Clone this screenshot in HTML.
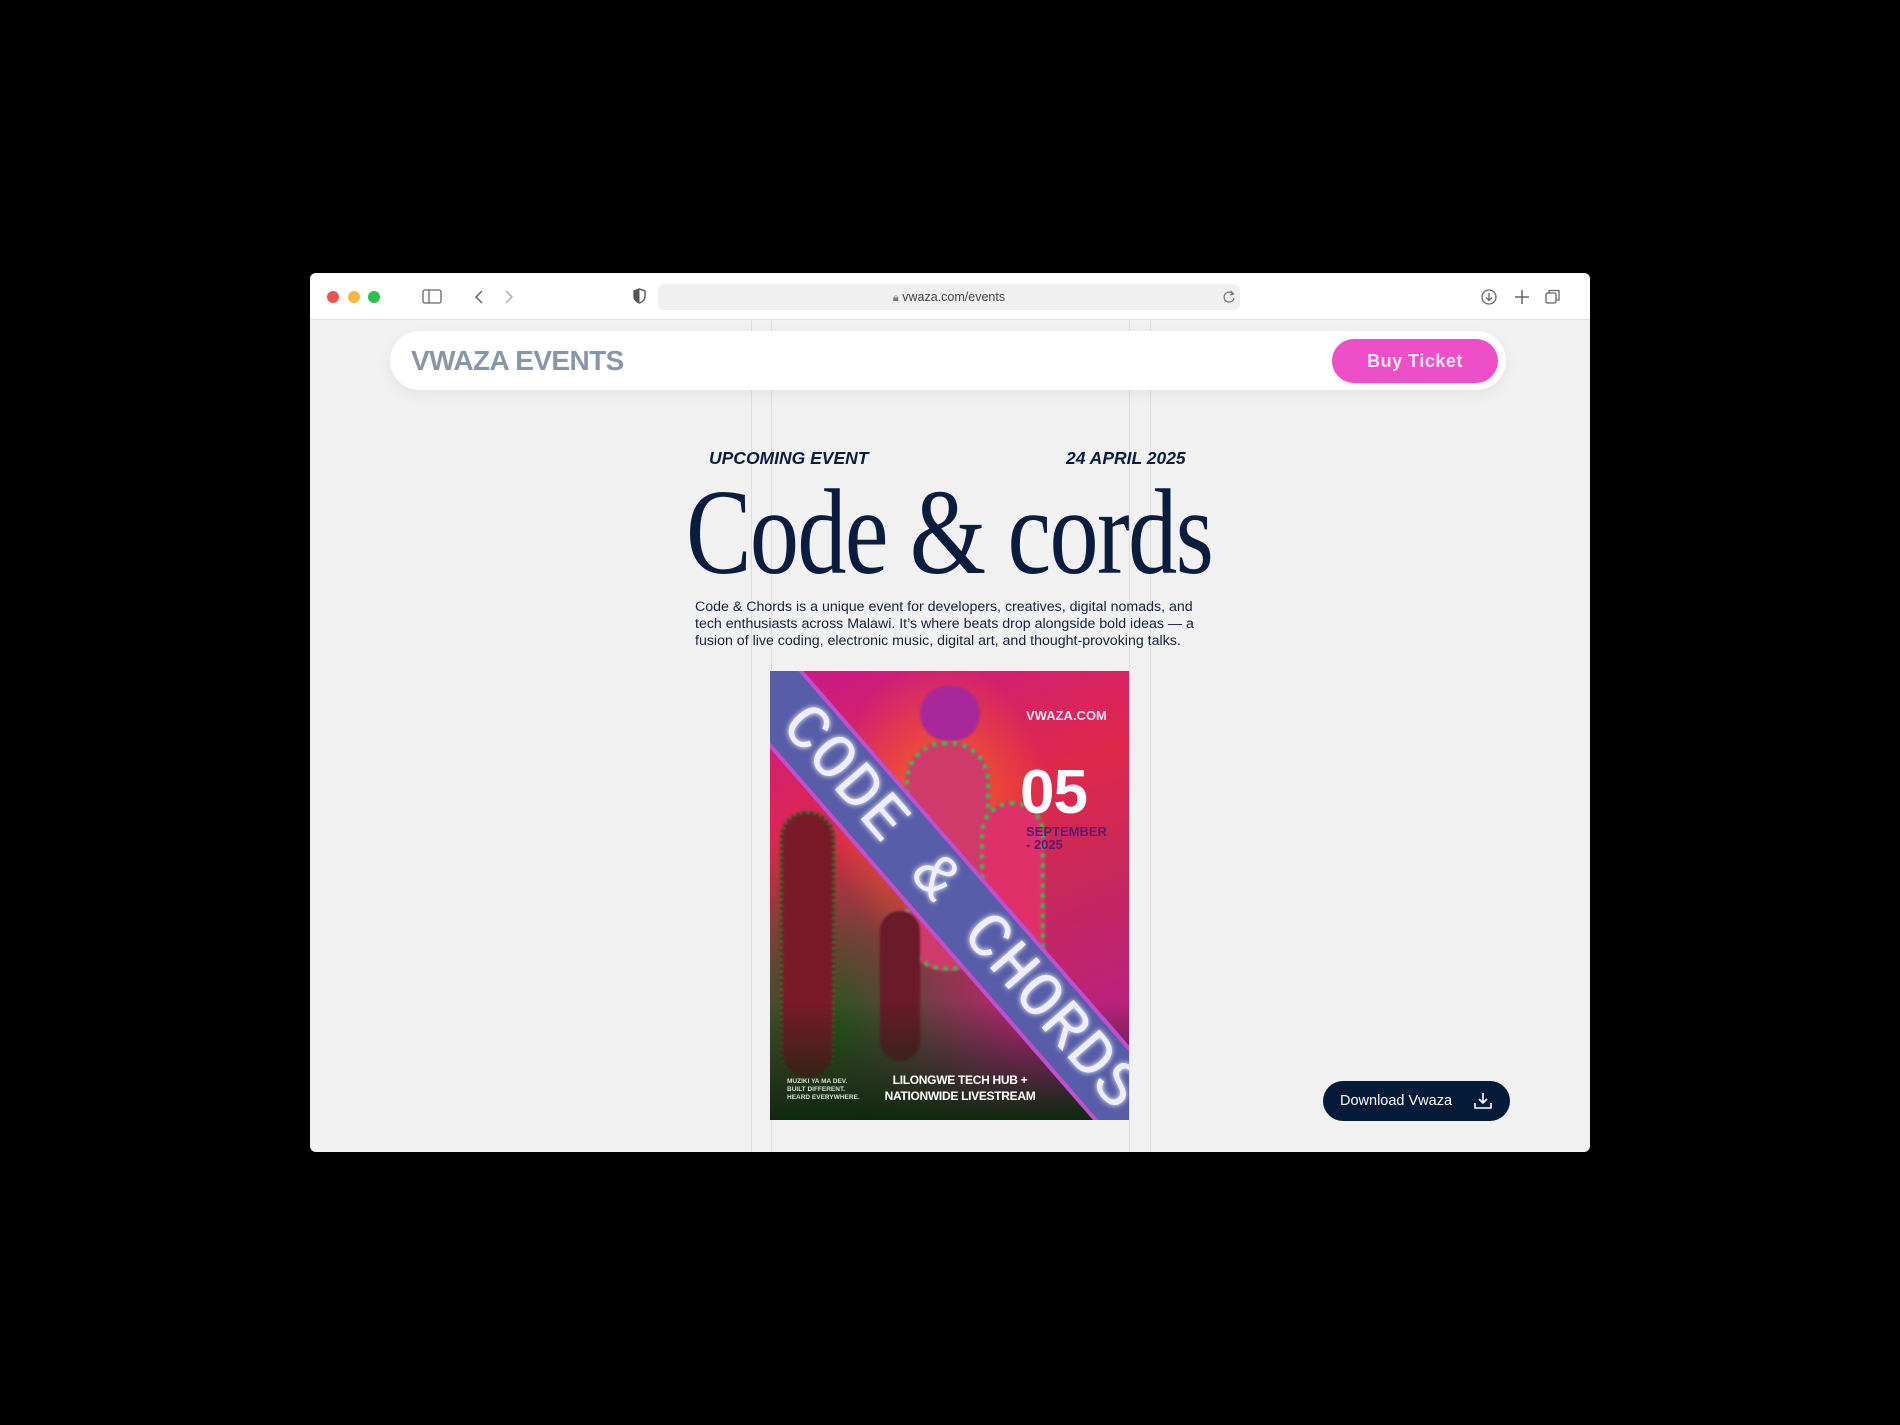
<!DOCTYPE html>
<html><head><meta charset="utf-8"><style>
*{margin:0;padding:0;box-sizing:border-box}
body{width:1900px;height:1425px;background:#000;position:relative;overflow:hidden;font-family:"Liberation Sans",sans-serif}
.win{position:absolute;left:310px;top:273px;width:1280px;height:879px;background:#f1f1f1;border-radius:6px;overflow:hidden}
.bar{position:absolute;left:0;top:0;width:1280px;height:47px;background:#fff;border-bottom:1px solid #e2e2e2}
.dot{position:absolute;top:18px;width:12px;height:12px;border-radius:50%}
.url{position:absolute;left:348px;top:11px;width:582px;height:26px;background:#f0f0f0;border-radius:6px;font-size:12.5px;color:#444;text-align:center;line-height:26px}
.vl{position:absolute;top:47px;bottom:0;width:1px;background:#dcdcdc}
.nav{position:absolute;left:80px;top:58px;width:1116px;height:59px;background:#fff;border-radius:30px;box-shadow:0 4px 14px rgba(0,0,0,.06)}
.logo{position:absolute;left:21px;top:14px;font-size:28px;font-weight:bold;color:#8896a8;letter-spacing:-0.6px}
.buy{position:absolute;left:942px;top:8px;width:166px;height:44px;border-radius:22px;background:#ee4fc8;color:#fde8f7;font-weight:bold;font-size:18px;text-align:center;line-height:44px;letter-spacing:.5px}
.lab{position:absolute;top:175px;font-size:17.5px;font-weight:bold;font-style:italic;color:#0b1d3e}
.title{position:absolute;left:376px;top:190px;font-family:"Liberation Serif",serif;font-size:122px;color:#0b1d3e;white-space:nowrap;transform-origin:0 0;transform:scaleX(.805);letter-spacing:-2px}
.p{position:absolute;left:385px;top:326px;width:510px;font-size:14.2px;line-height:17px;color:#14223f}
.poster{position:absolute;left:460px;top:398px;width:359px;height:449px;overflow:hidden;
background:radial-gradient(ellipse 110px 150px at 170px 140px,rgba(255,110,30,.9),rgba(255,110,30,0)),
radial-gradient(ellipse 200px 200px at 50px 360px,#1a5a18,rgba(30,90,30,0)),
linear-gradient(160deg,#c81a8a 0%,#e0284a 35%,#c8285a 55%,#b01c9a 100%)}
.fig{position:absolute;border-radius:40px;filter:blur(1px)}
.band{position:absolute;left:-140px;top:200px;width:660px;height:76px;background:#575da8;border-top:4px solid #c14fd0;border-bottom:4px solid #c14fd0;transform:rotate(49deg);transform-origin:center}
.bt{position:absolute;left:0;top:-2px;width:100%;text-align:center;font-family:"Liberation Mono",monospace;font-size:64px;line-height:72px;color:#eef;letter-spacing:1px;text-shadow:0 0 6px #fff}
.dl{position:absolute;left:1013px;top:808px;width:187px;height:40px;border-radius:20px;background:#061a3a;color:#fff;font-size:14.5px;line-height:40px;padding-left:17px}
</style></head><body>
<div class="win">
 <div class="bar">
  <div class="dot" style="left:17px;background:#ef5350"></div>
  <div class="dot" style="left:38px;background:#f6b73c"></div>
  <div class="dot" style="left:58px;background:#29c24a"></div>
  <svg style="position:absolute;left:112px;top:16px" width="20" height="15"><rect x="1" y="1" width="18" height="13" rx="2" fill="none" stroke="#666" stroke-width="1.3"/><line x1="7" y1="1" x2="7" y2="14" stroke="#666" stroke-width="1.3"/></svg>
  <svg style="position:absolute;left:163px;top:16px" width="40" height="16"><path d="M9 2 L3 8 L9 14" fill="none" stroke="#666" stroke-width="1.5"/><path d="M33 2 L39 8 L33 14" fill="none" stroke="#aaa" stroke-width="1.5"/></svg>
  <svg style="position:absolute;left:323px;top:15px" width="13" height="16"><path d="M6.5 1 L12 3 V8 C12 11.5 9.5 14 6.5 15 C3.5 14 1 11.5 1 8 V3 Z" fill="none" stroke="#555" stroke-width="1.4"/><path d="M6.5 1 V15 C3.5 14 1 11.5 1 8 V3Z" fill="#555"/></svg>
  <div class="url"><span style="color:#777;font-size:11px">🔒︎</span> vwaza.com/events<svg style="position:absolute;right:4px;top:6px" width="14" height="14"><path d="M11 4 A5 5 0 1 0 12 8" fill="none" stroke="#777" stroke-width="1.2"/><path d="M9 1 L11.5 4 L8 5" fill="none" stroke="#777" stroke-width="1.2"/></svg></div>
  <svg style="position:absolute;left:1170px;top:15px" width="100" height="18"><circle cx="9" cy="9" r="7" fill="none" stroke="#666" stroke-width="1.3"/><path d="M9 5 V12 M6 9.5 L9 12.5 L12 9.5" fill="none" stroke="#666" stroke-width="1.3"/><path d="M42 2 V16 M35 9 H49" stroke="#666" stroke-width="1.5"/><rect x="66" y="5" width="10" height="10" rx="1.5" fill="none" stroke="#666" stroke-width="1.3"/><path d="M69 5 V2.5 H79 V12 H76" fill="none" stroke="#666" stroke-width="1.3"/></svg>
 </div>
 <div class="vl" style="left:441px"></div><div class="vl" style="left:461px"></div>
 <div class="vl" style="left:819px"></div><div class="vl" style="left:840px"></div>
 <div class="nav"><div class="logo">VWAZA EVENTS</div><div class="buy">Buy Ticket</div></div>
 <div class="lab" style="left:399px">UPCOMING EVENT</div>
 <div class="lab" style="left:756px">24 APRIL 2025</div>
 <div class="title">Code &amp; cords</div>
 <div class="p">Code &amp; Chords is a unique event for developers, creatives, digital nomads, and tech enthusiasts across Malawi. It’s where beats drop alongside bold ideas — a fusion of live coding, electronic music, digital art, and thought-provoking talks.</div>
 <div class="poster">
  <div class="fig" style="left:150px;top:15px;width:60px;height:55px;background:#a8289a"></div>
  <div class="fig" style="left:135px;top:70px;width:85px;height:230px;background:#d03a6a;border:5px dotted #38c048"></div>
  <div class="fig" style="left:210px;top:130px;width:65px;height:200px;background:#e0306a;border:5px dotted #38c048"></div>
  <div class="fig" style="left:10px;top:140px;width:55px;height:270px;background:#7a1a28;border:3px dotted #2a7a2a"></div>
  <div class="fig" style="left:110px;top:240px;width:40px;height:150px;background:#6a1a28"></div>
  <div style="position:absolute;left:0;top:330px;width:359px;height:120px;background:linear-gradient(rgba(10,40,10,0),#0c2a0c)"></div>
  <div class="band"><div class="bt">CODE &amp; CHORDS</div></div>
  <div style="position:absolute;left:256px;top:37px;font-size:13px;font-weight:bold;color:#f3e3f3">VWAZA.COM</div>
  <div style="position:absolute;left:250px;top:86px;font-size:62px;font-weight:bold;color:#fff;letter-spacing:-1px">05</div>
  <div style="position:absolute;left:256px;top:154px;font-size:13px;font-weight:bold;color:#5a1a70;line-height:13px">SEPTEMBER<br>- 2025</div>
  <div style="position:absolute;left:95px;top:401px;width:190px;text-align:center;font-size:12px;font-weight:bold;color:#fff;line-height:16px;letter-spacing:-.3px">LILONGWE TECH HUB +<br>NATIONWIDE LIVESTREAM</div>
  <div style="position:absolute;left:17px;top:407px;font-size:6.5px;font-weight:bold;color:#ddd;line-height:8px">MUZIKI YA MA DEV.<br>BUILT DIFFERENT.<br>HEARD EVERYWHERE.</div>
 </div>
 <div class="dl">Download Vwaza<svg style="position:absolute;left:150px;top:10px" width="20" height="20"><path d="M10 2 V12 M6 8 L10 12 L14 8 M2 12 V17 H18 V12" fill="none" stroke="#fff" stroke-width="1.6"/></svg></div>
</div>
</body></html>
